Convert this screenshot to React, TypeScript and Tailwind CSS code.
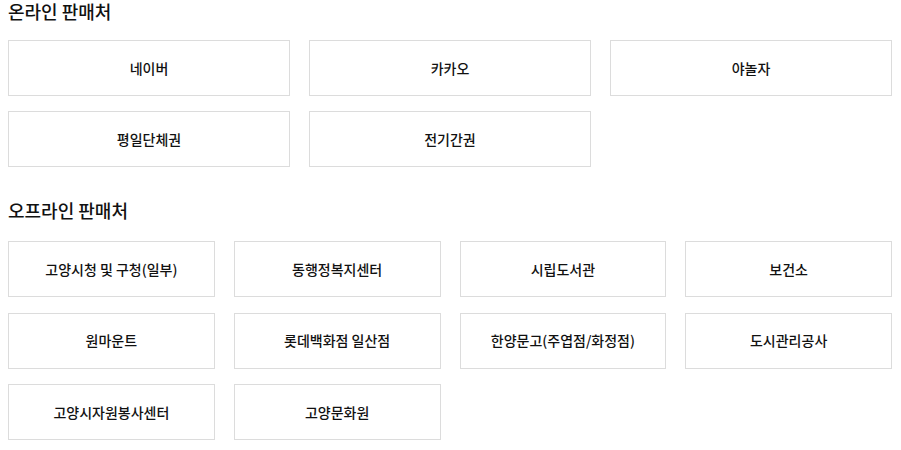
const online = ["네이버", "카카오", "야놀자", "평일단체권", "전기간권"];
const offline = [
    "고양시청 및 구청(일부)",
    "동행정복지센터",
    "시립도서관",
    "보건소",
    "원마운트",
    "롯데백화점 일산점",
    "한양문고(주엽점/화정점)",
    "도시관리공사",
    "고양시자원봉사센터",
    "고양문화원",
];

const Shop = ({ name }: { name: string }) => {
    return (
        <div className="h-[56px] flex items-center justify-center border border-[#dcdcdc] bg-white text-[14px] text-[#111] font-medium">
            {name}
        </div>
    );
};

const App = () => {
    return (
        <div className="w-[901px] h-[450px] bg-white pl-[8px] pr-[9px] overflow-hidden" style={{ fontFamily: '"Noto Sans CJK KR", "Noto Sans", sans-serif' }}>
            <h2 className="h-[22px] leading-[22px] text-[18px] font-medium text-[#111]">온라인 판매처</h2>
            <div className="mt-[18px] grid grid-cols-3 gap-x-[19px] gap-y-[15px]">
                {online.map((name) => (
                    <Shop key={name} name={name} />
                ))}
            </div>

            <h2 className="mt-[33px] h-[20px] leading-[20px] text-[18px] font-medium text-[#111]">오프라인 판매처</h2>
            <div className="mt-[21px] grid grid-cols-4 gap-x-[19px] gap-y-[15.5px]">
                {offline.map((name) => (
                    <Shop key={name} name={name} />
                ))}
            </div>
        </div>
    );
};

export default App;
